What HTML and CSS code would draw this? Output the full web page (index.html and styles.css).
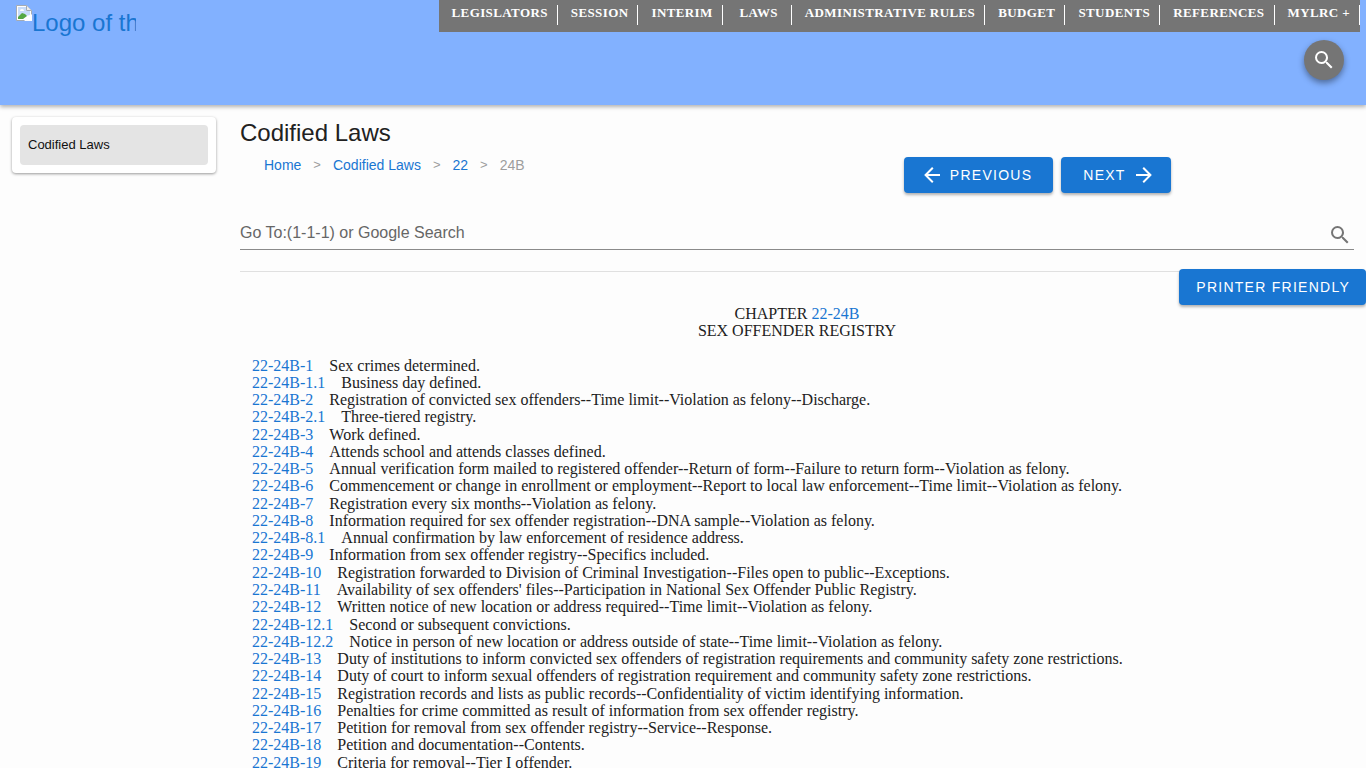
FILE: index.html
```html
<!DOCTYPE html>
<html lang="en">
<head>
<meta charset="utf-8">
<title>Codified Laws 22-24B</title>
<link rel="stylesheet" href="styles.css">
</head>
<body>
<header class="site-header">
  <a class="logo" href="#">
    <svg class="logo-icon" width="16" height="16" viewBox="0 0 16 16" aria-hidden="true">
      <path d="M.5.5h10l5 5v10H.5z" fill="#fff" stroke="#a5abb3"/>
      <path d="M2 2h8v4h4v4l-4 1-3 3H2z" fill="#c8dcfa"/>
      <path d="M4 6a2 2 0 0 1 4 0z" fill="#fff"/>
      <path d="M2 14v-2l4-4 3 1 2 2-4 3z" fill="#55a843"/>
      <path d="M10.500.5v5h5" fill="#eee" stroke="#a5abb3"/>
      <path d="M8 16l8-7v7z" fill="#fff"/>
    </svg><span>Logo of the South Dakota Legislature</span>
  </a>
  <div class="header-side">
    <nav class="main-nav">
      <a href="#">LEGISLATORS</a>
      <a href="#">SESSION</a>
      <a href="#">INTERIM</a>
      <a href="#">LAWS</a>
      <a href="#">ADMINISTRATIVE RULES</a>
      <a href="#">BUDGET</a>
      <a href="#">STUDENTS</a>
      <a href="#">REFERENCES</a>
      <a href="#">MYLRC +</a>
    </nav>
    <button class="round-search" type="button" aria-label="Search site">
      <svg class="icon" viewBox="0 0 24 24"><path d="M9.500 3A6.500 6.500 0 0 1 16 9.500c0 1.610-.59 3.090-1.560 4.230l.27.27h.79l5 5-1.500 1.500-5-5v-.79l-.27-.27A6.516 6.516 0 0 1 9.500 16a6.500 6.500 0 0 1 0-13m0 2C7 5 5 7 5 9.500S7 14 9.500 14 14 12 14 9.500 12 5 9.500 5z"/></svg>
    </button>
  </div>
</header>
<div class="page">
  <aside class="side-card"><a href="#">Codified Laws</a></aside>
  <main class="content">
    <div class="top-row">
      <div>
        <h1>Codified Laws</h1>
        <nav class="crumbs" aria-label="Breadcrumb">
          <a href="#">Home</a><span class="sep">&gt;</span><a href="#">Codified Laws</a><span class="sep">&gt;</span><a href="#">22</a><span class="sep">&gt;</span><span>24B</span>
        </nav>
      </div>
      <div class="pager">
        <button class="btn" type="button"><svg class="icon" viewBox="0 0 24 24"><path d="M20 11v2H8l5.500 5.500-1.420 1.420L4.160 12l7.920-7.920L13.500 5.500 8 11z"/></svg>PREVIOUS</button>
        <button class="btn btn-next" type="button">NEXT<svg class="icon" viewBox="0 0 24 24"><path d="M4 11v2h12l-5.500 5.500 1.420 1.420L19.840 12l-7.920-7.920L10.500 5.500 16 11z"/></svg></button>
      </div>
    </div>
    <form class="goto">
      <input type="text" aria-label="Go To:(1-1-1) or Google Search" placeholder="Go To:(1-1-1) or Google Search">
      <button type="button" aria-label="Search"><svg class="icon" viewBox="0 0 24 24"><path d="M9.500 3A6.500 6.500 0 0 1 16 9.500c0 1.610-.59 3.090-1.560 4.230l.27.27h.79l5 5-1.500 1.500-5-5v-.79l-.27-.27A6.516 6.516 0 0 1 9.500 16a6.500 6.500 0 0 1 0-13m0 2C7 5 5 7 5 9.500S7 14 9.500 14 14 12 14 9.500 12 5 9.500 5z"/></svg></button>
    </form>
    <div class="print-row"><button class="btn" type="button">PRINTER FRIENDLY</button></div>
    <article class="statute">
      <h2>CHAPTER <a href="#">22-24B</a><br>SEX OFFENDER REGISTRY</h2>
      <ul>
        <li><a href="#">22-24B-1</a>Sex crimes determined.</li>
        <li><a href="#">22-24B-1.1</a>Business day defined.</li>
        <li><a href="#">22-24B-2</a>Registration of convicted sex offenders--Time limit--Violation as felony--Discharge.</li>
        <li><a href="#">22-24B-2.1</a>Three-tiered registry.</li>
        <li><a href="#">22-24B-3</a>Work defined.</li>
        <li><a href="#">22-24B-4</a>Attends school and attends classes defined.</li>
        <li><a href="#">22-24B-5</a>Annual verification form mailed to registered offender--Return of form--Failure to return form--Violation as felony.</li>
        <li><a href="#">22-24B-6</a>Commencement or change in enrollment or employment--Report to local law enforcement--Time limit--Violation as felony.</li>
        <li><a href="#">22-24B-7</a>Registration every six months--Violation as felony.</li>
        <li><a href="#">22-24B-8</a>Information required for sex offender registration--DNA sample--Violation as felony.</li>
        <li><a href="#">22-24B-8.1</a>Annual confirmation by law enforcement of residence address.</li>
        <li><a href="#">22-24B-9</a>Information from sex offender registry--Specifics included.</li>
        <li><a href="#">22-24B-10</a>Registration forwarded to Division of Criminal Investigation--Files open to public--Exceptions.</li>
        <li><a href="#">22-24B-11</a>Availability of sex offenders' files--Participation in National Sex Offender Public Registry.</li>
        <li><a href="#">22-24B-12</a>Written notice of new location or address required--Time limit--Violation as felony.</li>
        <li><a href="#">22-24B-12.1</a>Second or subsequent convictions.</li>
        <li><a href="#">22-24B-12.2</a>Notice in person of new location or address outside of state--Time limit--Violation as felony.</li>
        <li><a href="#">22-24B-13</a>Duty of institutions to inform convicted sex offenders of registration requirements and community safety zone restrictions.</li>
        <li><a href="#">22-24B-14</a>Duty of court to inform sexual offenders of registration requirement and community safety zone restrictions.</li>
        <li><a href="#">22-24B-15</a>Registration records and lists as public records--Confidentiality of victim identifying information.</li>
        <li><a href="#">22-24B-16</a>Penalties for crime committed as result of information from sex offender registry.</li>
        <li><a href="#">22-24B-17</a>Petition for removal from sex offender registry--Service--Response.</li>
        <li><a href="#">22-24B-18</a>Petition and documentation--Contents.</li>
        <li><a href="#">22-24B-19</a>Criteria for removal--Tier I offender.</li>
      </ul>
    </article>
  </main>
</div>
</body>
</html>
```
FILE: styles.css
```css
* { box-sizing: border-box; }
body {
  margin: 0;
  background: #fdfdfd;
  color: #212121;
  font-family: "Liberation Sans", Arial, sans-serif;
  font-size: 16px;
}
a { color: #1976d2; text-decoration: none; }
button { font-family: inherit; border: 0; cursor: pointer; }
.icon { width: 24px; height: 24px; fill: currentColor; display: block; flex: none; }

.site-header {
  display: flex;
  justify-content: space-between;
  align-items: flex-start;
  min-height: 105px;
  padding: 0 6px 0 16px;
  background: #82b1ff;
  box-shadow: 0 2px 4px rgba(0, 0, 0, .3);
}
.logo {
  display: flex;
  width: 120px;
  margin-top: 5px;
  overflow: hidden;
  white-space: nowrap;
  font-size: 24px;
  line-height: 36px;
}
.logo-icon { flex: none; }
.header-side { display: flex; flex-direction: column; align-items: flex-end; }
.main-nav {
  display: flex;
  height: 32px;
  background: #757575;
  font-family: "Liberation Serif", "Times New Roman", serif;
  font-size: 13px;
  font-weight: bold;
  letter-spacing: .03em;
}
.main-nav a {
  min-width: 69px;
  height: 20px;
  margin-top: 5px;
  padding: 0 9px 0 13px;
  border-right: 1px solid #fff;
  color: #fff;
  line-height: 16px;
  text-align: center;
}
.round-search {
  display: grid;
  place-items: center;
  width: 40px;
  height: 40px;
  margin: 8px 16px 0 0;
  padding: 0;
  border-radius: 50%;
  background: #757575;
  color: #fff;
  box-shadow: 0 3px 6px rgba(0, 0, 0, .4);
}

.page { display: flex; align-items: flex-start; }
.side-card {
  flex: none;
  width: 204px;
  margin: 12px;
  padding: 8px;
  border-radius: 4px;
  background: #fff;
  box-shadow: 0 1px 3px rgba(0, 0, 0, .4);
}
.side-card a {
  display: block;
  padding: 0 8px;
  border-radius: 4px;
  background: #e4e4e4;
  color: #111;
  font-size: 13px;
  line-height: 40px;
}
.content { flex: 1; min-width: 0; padding-left: 12px; }
.top-row { display: grid; grid-template-columns: 7fr 5fr; margin-left: -12px; }
.top-row > div { padding-left: 12px; }
h1 { margin: 12px 0 0; font-size: 24px; font-weight: 400; line-height: 32px; }
.crumbs {
  display: flex;
  gap: 12px;
  padding: 6px 24px;
  color: #9e9e9e;
  font-size: 14px;
  line-height: 20px;
}
.crumbs .sep { font-size: 13px; }
.pager { display: flex; align-items: flex-start; gap: 8px; padding-top: 52px; }
.btn {
  display: flex;
  align-items: center;
  gap: 6px;
  height: 36px;
  padding: 0 16px 0 17px;
  border-radius: 4px;
  background: #1976d2;
  color: #fff;
  font-size: 14px;
  font-weight: 400;
  letter-spacing: .09em;
  box-shadow: 0 2px 3px rgba(0, 0, 0, .3);
}
.pager .btn { padding: 0 21px 0 16px; }
.pager .btn-next { padding: 0 15px 0 22px; }

.goto {
  display: flex;
  align-items: center;
  margin: 24px 12px 0 0;
  border-bottom: 1px solid #8a8a8a;
}
.goto input {
  flex: 1;
  height: 32px;
  padding: 0;
  border: 0;
  outline: 0;
  background: transparent;
  font: inherit;
}
.goto input::placeholder { color: #666; opacity: 1; }
.goto button { padding: 4px 2px 0; background: none; color: #757575; }
.print-row {
  display: flex;
  justify-content: flex-end;
  margin-top: 21px;
  border-top: 1px solid #e0e0e0;
}
.print-row .btn { margin-top: -3px; }

.statute {
  padding-right: 12px;
  font-family: "Liberation Serif", "Times New Roman", serif;
  line-height: 1.08;
}
.statute h2 { margin: 0; font-size: 16px; font-weight: 400; text-align: center; }
.statute ul { margin: 17px 0 0; padding: 0 0 0 12px; list-style: none; }
.statute li a { margin-right: 16px; }
```
